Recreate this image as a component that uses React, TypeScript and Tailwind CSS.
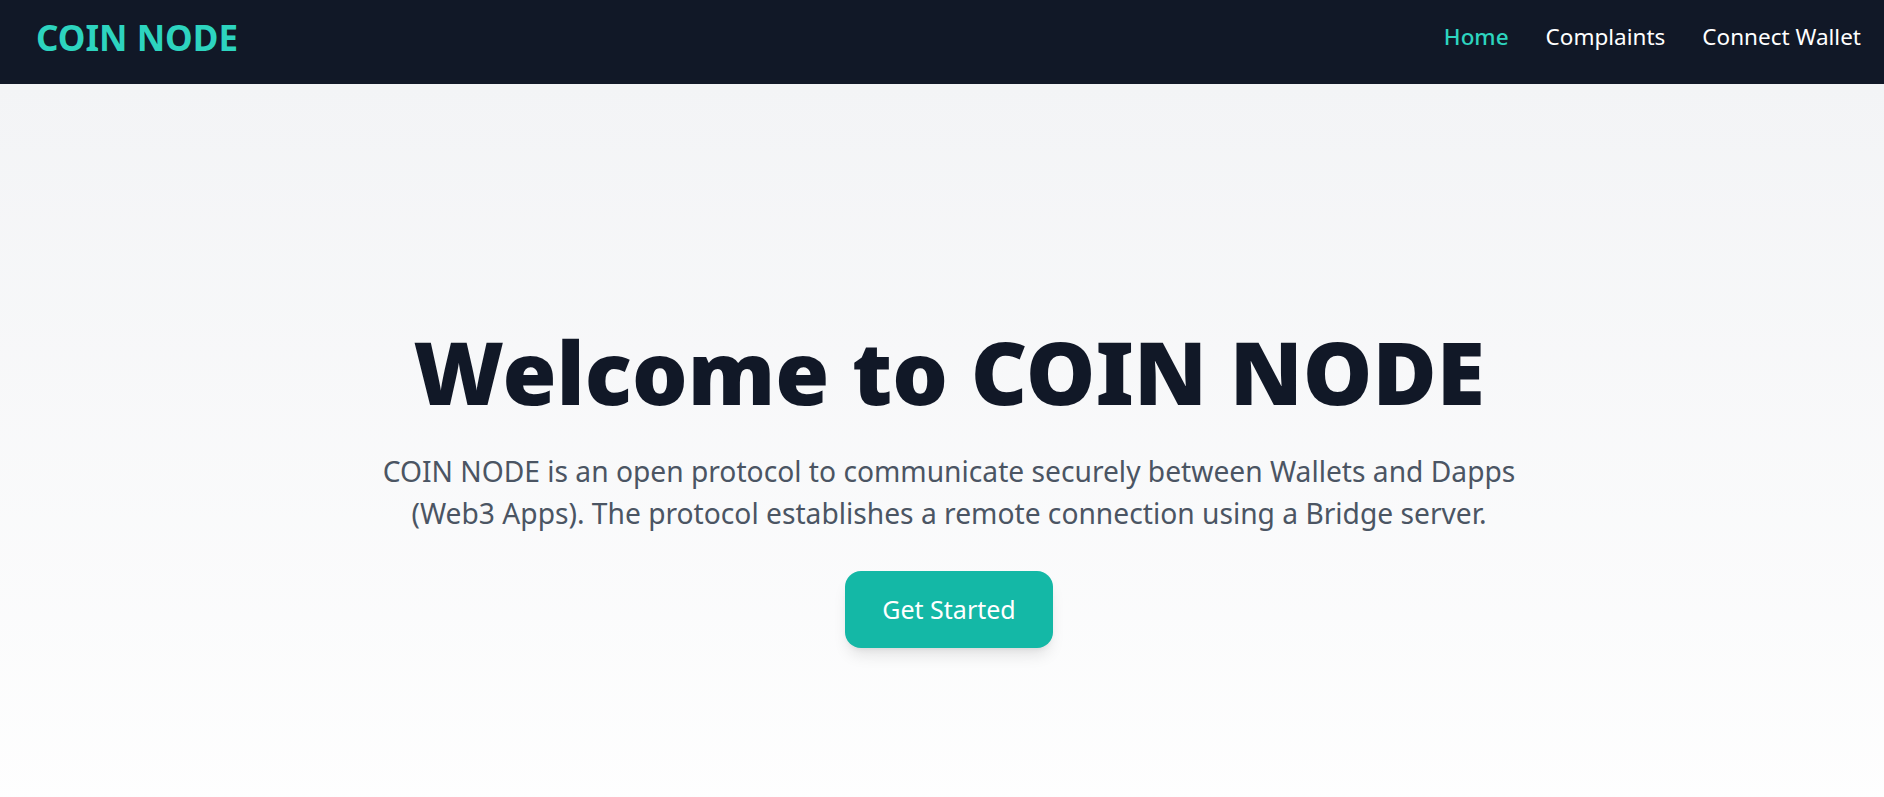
import React from "react";

export default function App() {
  const font = { fontFamily: '"Noto Sans", "Open Sans", sans-serif' };
  return (
    <div className="min-h-screen" style={font}>
      <nav className="h-[84px] bg-[#111827] flex items-center justify-between pl-[36px] pr-[23px] pb-[9px]">
        <div className="text-[#2dd4bf] font-bold text-[35px] leading-none">COIN NODE</div>
        <div className="flex items-center gap-[37px] text-[22.5px] leading-none text-white">
          <a className="text-[#2dd4bf] font-medium">Home</a>
          <a>Complaints</a>
          <a>Connect Wallet</a>
        </div>
      </nav>
      <main className="min-h-[797px] bg-gradient-to-b from-[#f3f4f6] to-white flex flex-col items-center pt-[243px] pl-[14px] text-center">
        <h1 className="text-[87.5px] leading-[88px] font-black text-[#111827]">Welcome to COIN NODE</h1>
        <p className="mt-[35px] text-[28.2px] leading-[42px] text-[#4b5563]">
          COIN NODE is an open protocol to communicate securely between Wallets and Dapps
          <br />
          (Web3 Apps). The protocol establishes a remote connection using a Bridge server.
        </p>
        <button className="mt-[37px] h-[77px] px-[37px] rounded-[16px] bg-[#14b8a6] text-white text-[25px] shadow-lg">
          Get Started
        </button>
      </main>
    </div>
  );
}
